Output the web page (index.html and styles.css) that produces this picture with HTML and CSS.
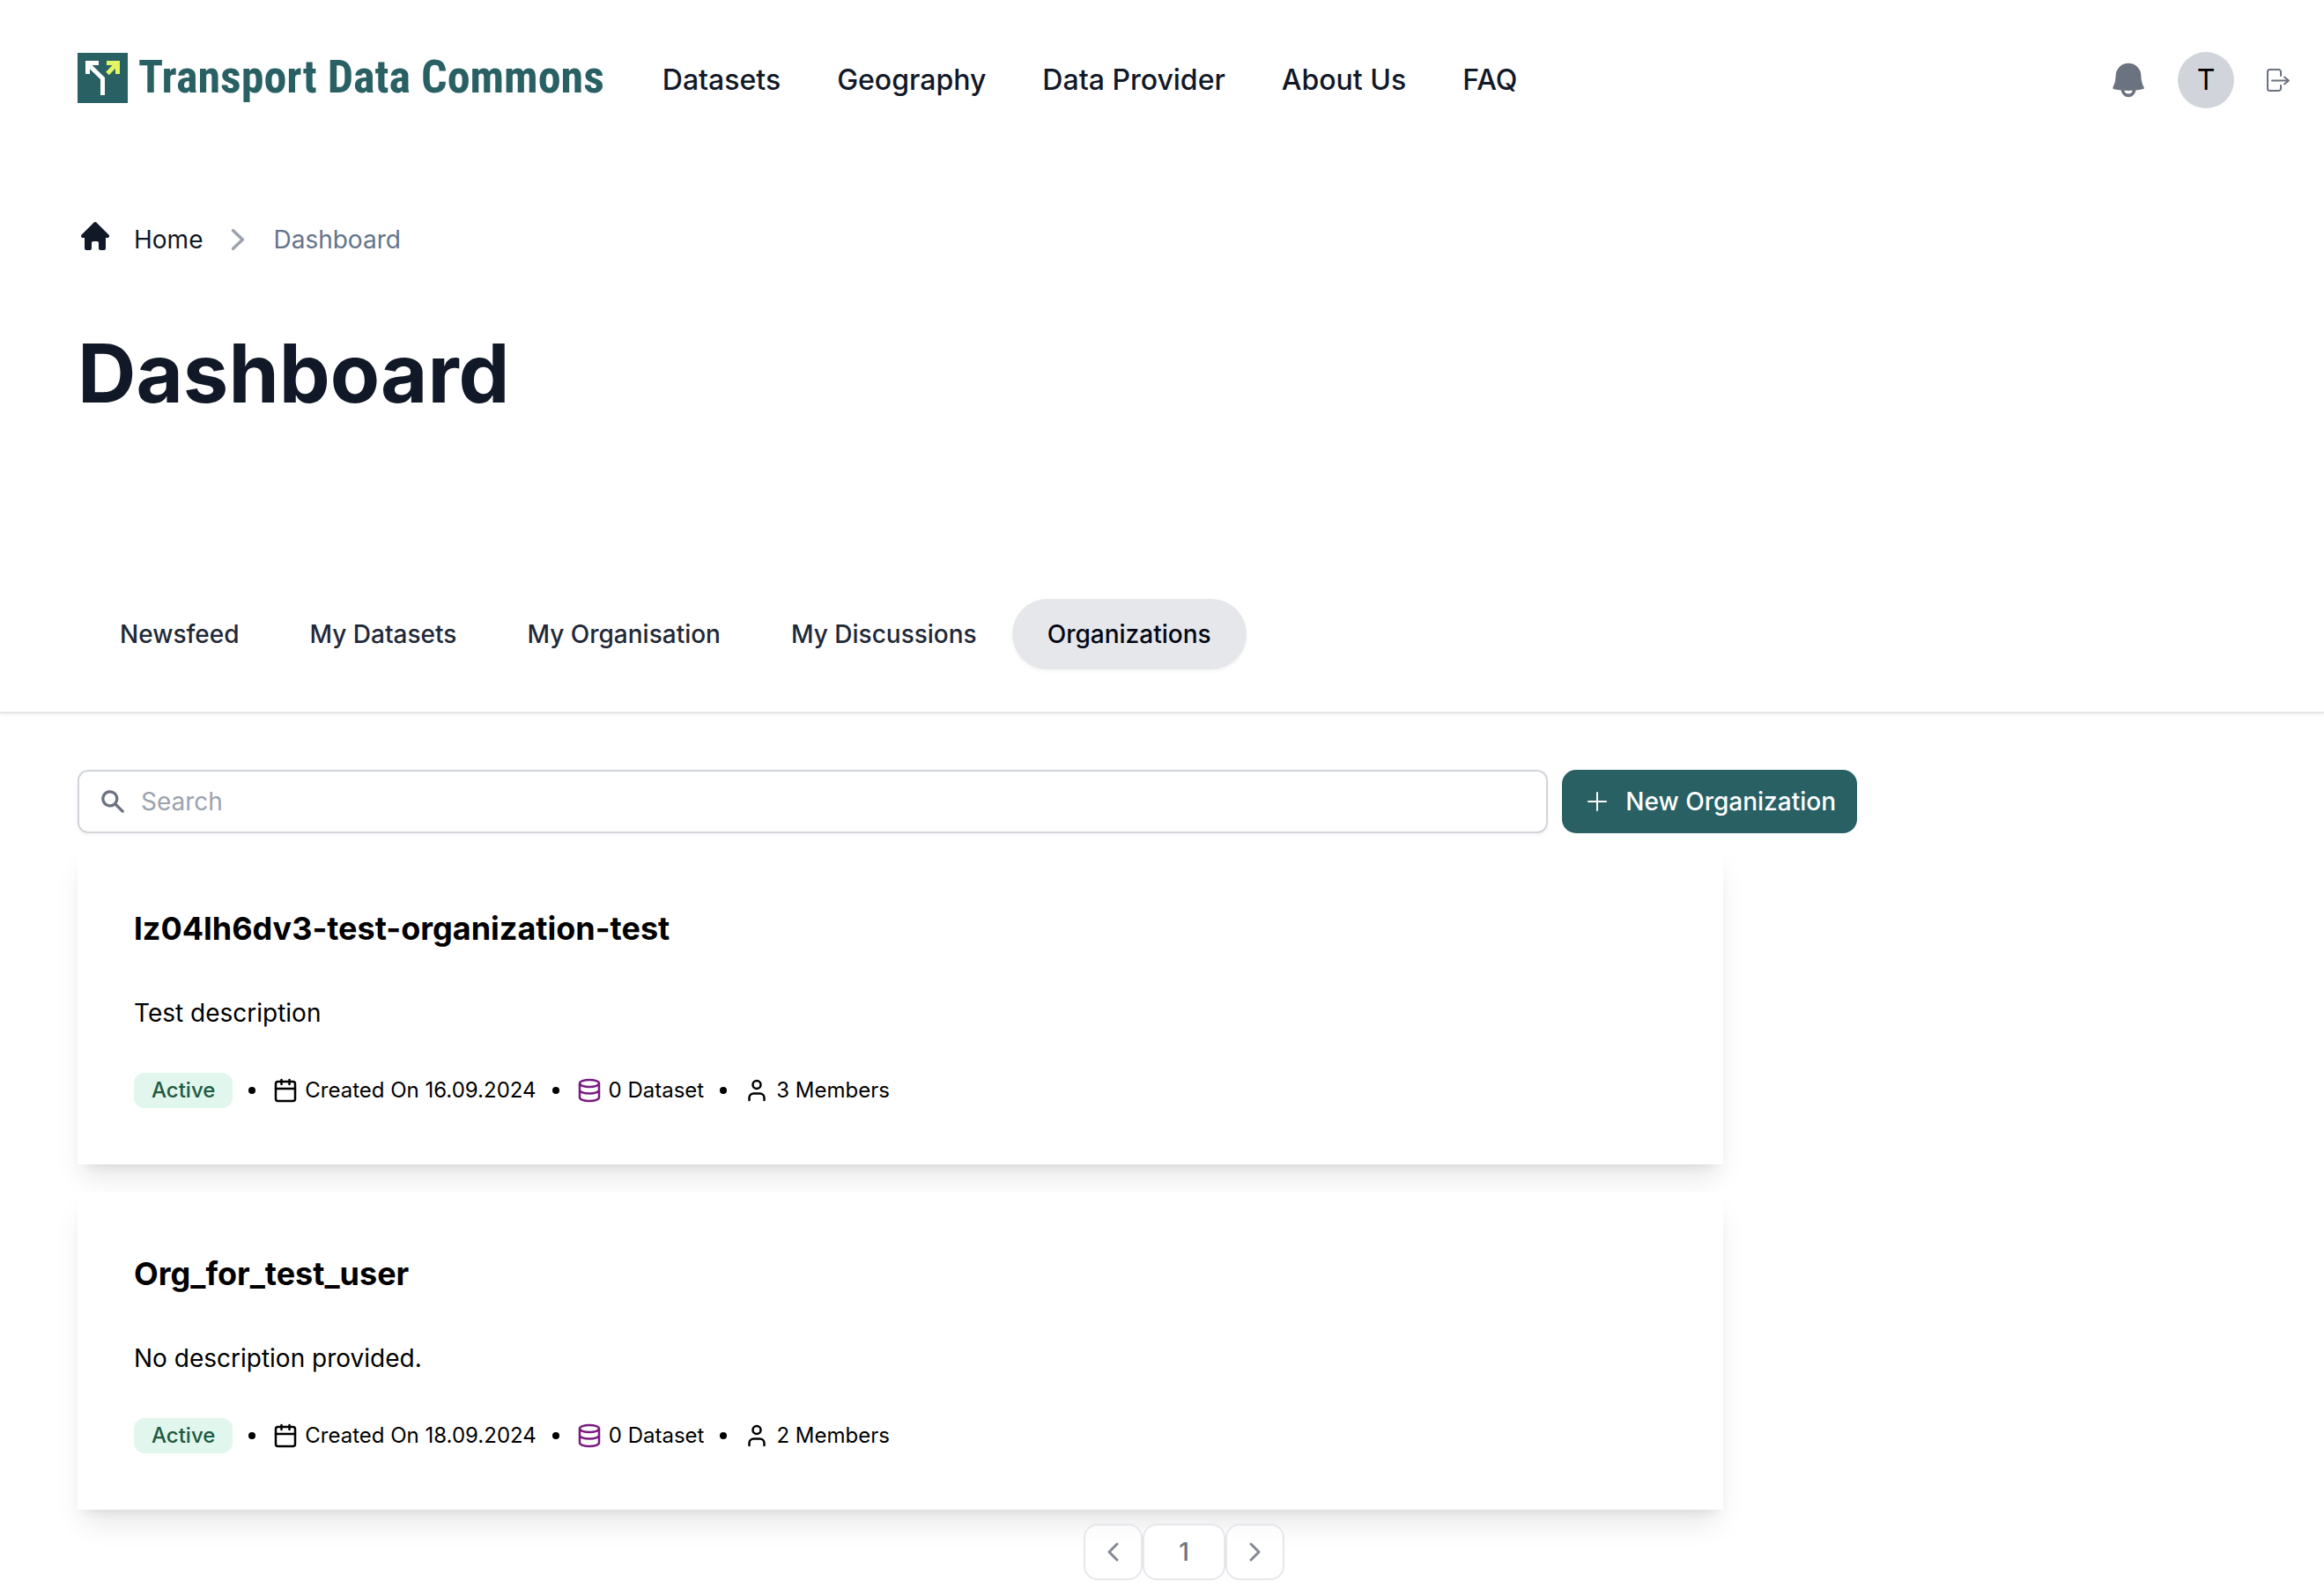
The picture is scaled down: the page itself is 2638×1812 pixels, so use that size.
FILE: index.html
```html
<!DOCTYPE html>
<html lang="en">
<head>
<meta charset="utf-8">
<title>Dashboard - Transport Data Commons</title>
<meta name="viewport" content="width=device-width, initial-scale=1">
<link rel="stylesheet" href="styles.css">
</head>
<body>
<svg class="sprite" aria-hidden="true">
  <symbol id="calendar" viewBox="0 0 32 32"><g fill="none" stroke="currentColor" stroke-width="2.500" stroke-linecap="round" stroke-linejoin="round"><rect x="5" y="6" width="22" height="22" rx="2.500"/><path d="M11.500 4v5M20.500 4v5M5 14h22"/></g></symbol>
  <symbol id="database" viewBox="0 0 32 32"><g fill="none" stroke="currentColor" stroke-width="2.500"><ellipse cx="16" cy="8" rx="11" ry="4"/><path d="M5 8v16c0 2.200 4.900 4 11 4s11-1.800 11-4V8M5 15.500c0 2.200 4.900 4 11 4s11-1.800 11-4"/></g></symbol>
  <symbol id="user" viewBox="0 0 32 32"><g fill="none" stroke="currentColor" stroke-width="2.500" stroke-linecap="round"><circle cx="16" cy="9.500" r="4.500"/><path d="M7.500 27v-2.500a5 5 0 0 1 5-5h7a5 5 0 0 1 5 5v2.500"/></g></symbol>
</svg>

<header class="header">
  <a class="logo" href="#">
    <svg class="logo-mark" viewBox="0 0 57 57" aria-hidden="true"><path fill="#286064" d="M0 0h57v57H0z"/><path fill="none" stroke="#fff" stroke-width="5" d="M28.500 48V29L13 14"/><path fill="#fff" d="M9 9h15v5H14v10H9z"/><path fill="none" stroke="#e3f563" stroke-width="5" d="M34 23.500l9-9.500"/><path fill="#e3f563" d="M33 9h15v15h-5V14H33z"/></svg>
    <span>Transport Data Commons</span>
  </a>
  <nav class="nav" aria-label="Main">
    <a href="#">Datasets</a>
    <a href="#">Geography</a>
    <a href="#">Data Provider</a>
    <a href="#">About Us</a>
    <a href="#">FAQ</a>
  </nav>
  <div class="account">
    <button class="icon-button" type="button" aria-label="Notifications"><svg class="icon-bell" viewBox="0 0 20 20"><path fill="currentColor" fill-rule="evenodd" d="M4 8a6 6 0 1112 0c0 1.887.454 3.665 1.257 5.234a.75.75 0 01-.515 1.076 32.903 32.903 0 01-3.256.508 3.500 3.500 0 01-6.972 0 32.910 32.910 0 01-3.256-.508.75.75 0 01-.515-1.076A11.448 11.448 0 004 8zm6 7c-.655 0-1.305-.02-1.950-.057a2 2 0 003.900 0c-.645.038-1.295.057-1.950.057z"/></svg></button>
    <button class="avatar" type="button">T</button>
    <button class="icon-button" type="button" aria-label="Sign out"><svg class="icon-signout" viewBox="0 0 32 32"><path fill="none" stroke="currentColor" stroke-width="2" stroke-linecap="round" stroke-linejoin="round" d="M21 11V6.500A2.500 2.500 0 0 0 18.500 4h-10A2.500 2.500 0 0 0 6 6.500v19A2.500 2.500 0 0 0 8.500 28h10a2.500 2.500 0 0 0 2.500-2.500V22M11 16.500h19M25 12.500l5 4-5 4"/></svg></button>
  </div>
</header>

<section class="intro">
  <nav aria-label="Breadcrumb">
    <ol class="breadcrumb">
      <li><a href="#"><svg class="icon-home" viewBox="0 0 20 20" aria-hidden="true"><path fill="currentColor" d="M9.293 2.293a1 1 0 011.414 0l7 7A1 1 0 0117 11h-1v6a1 1 0 01-1 1h-2a1 1 0 01-1-1v-3a1 1 0 00-1-1H9a1 1 0 00-1 1v3a1 1 0 01-1 1H5a1 1 0 01-1-1v-6H3a1 1 0 01-.707-1.707l7-7z"/></svg>Home</a></li>
      <li><svg class="icon-crumb" viewBox="0 0 20 20" aria-hidden="true"><path fill="currentColor" d="M7.210 14.770a.75.75 0 01.02-1.060L11.168 10 7.230 6.290a.75.75 0 111.040-1.080l4.500 4.250a.75.75 0 010 1.080l-4.500 4.250a.75.75 0 01-1.060-.02z"/></svg><a class="current" href="#" aria-current="page">Dashboard</a></li>
    </ol>
  </nav>
  <h1>Dashboard</h1>
</section>

<div class="tabs" role="tablist">
  <button type="button" role="tab">Newsfeed</button>
  <button type="button" role="tab">My Datasets</button>
  <button type="button" role="tab">My Organisation</button>
  <button type="button" role="tab">My Discussions</button>
  <button class="active" type="button" role="tab" aria-selected="true">Organizations</button>
</div>

<main class="main">
  <div class="toolbar">
    <label class="search">
      <svg viewBox="0 0 20 20" aria-hidden="true"><path fill="currentColor" fill-rule="evenodd" d="M8 4a4 4 0 100 8 4 4 0 000-8zM2 8a6 6 0 1110.890 3.476l4.817 4.817a1 1 0 01-1.414 1.414l-4.816-4.816A6 6 0 012 8z"/></svg>
      <input type="search" placeholder="Search" aria-label="Search">
    </label>
    <button class="new-button" type="button"><svg viewBox="0 0 40 40" aria-hidden="true"><path fill="none" stroke="currentColor" stroke-width="2" stroke-linecap="round" d="M20 10v20M10 20h20"/></svg>New Organization</button>
  </div>

  <div class="cards">
    <article class="card">
      <h2>lz04lh6dv3-test-organization-test</h2>
      <p>Test description</p>
      <div class="meta">
        <span class="badge">Active</span><i class="dot"></i>
        <span class="fact"><svg><use href="#calendar"/></svg>Created On 16.09.2024</span><i class="dot"></i>
        <span class="fact"><svg class="purple"><use href="#database"/></svg>0 Dataset</span><i class="dot"></i>
        <span class="fact"><svg><use href="#user"/></svg>3 Members</span>
      </div>
    </article>
    <article class="card">
      <h2>Org_for_test_user</h2>
      <p>No description provided.</p>
      <div class="meta">
        <span class="badge">Active</span><i class="dot"></i>
        <span class="fact"><svg><use href="#calendar"/></svg>Created On 18.09.2024</span><i class="dot"></i>
        <span class="fact"><svg class="purple"><use href="#database"/></svg>0 Dataset</span><i class="dot"></i>
        <span class="fact"><svg><use href="#user"/></svg>2 Members</span>
      </div>
    </article>
  </div>

  <nav class="pager" aria-label="Pagination">
    <button class="step" type="button" aria-label="Previous page" disabled><svg viewBox="0 0 24 24"><path d="M16 3l-9 9 9 9"/></svg></button>
    <button class="page" type="button" aria-current="page">1</button>
    <button class="step" type="button" aria-label="Next page" disabled><svg viewBox="0 0 24 24"><path d="M8 3l9 9-9 9"/></svg></button>
  </nav>
</main>
</body>
</html>
```
FILE: styles.css
```css
*, *::before, *::after { box-sizing: border-box; }
body {
  margin: 0;
  background: #fff;
  color: #000;
  font-family: Inter, "Liberation Sans", sans-serif;
  font-size: 28px;
  line-height: 40px;
}
h1, h2, p, ol { margin: 0; padding: 0; }
a { color: inherit; text-decoration: none; }
button { margin: 0; padding: 0; border: 0; background: none; color: inherit; font: inherit; cursor: pointer; }
svg { display: block; flex: none; }
.sprite { position: absolute; width: 0; height: 0; }

.header {
  display: flex;
  align-items: center;
  min-height: 182px;
  padding: 0 38px 0 88px;
}
.logo {
  display: flex;
  align-items: center;
  gap: 12px;
  margin-bottom: 6px;
  color: #286064;
  font-family: "Roboto Condensed", "Liberation Sans Narrow", Roboto, sans-serif;
  font-size: 52px;
  font-weight: 700;
  line-height: 56px;
  white-space: nowrap;
}
.logo-mark { width: 57px; height: 57px; }
.nav {
  display: flex;
  gap: 64px;
  margin-left: 66px;
  color: #111827;
  font-size: 32px;
  font-weight: 500;
  white-space: nowrap;
}
.account { display: flex; align-items: center; gap: 32px; margin-left: auto; color: #6b7280; }
.icon-bell { width: 48px; height: 48px; }
.icon-signout { width: 32px; height: 32px; }
.avatar {
  width: 64px;
  height: 64px;
  border-radius: 50%;
  background: #d1d5db;
  color: #000;
  font-size: 32px;
}

.intro { padding: 66px 38px 208px 88px; }
.breadcrumb { display: flex; gap: 16px; list-style: none; color: #111827; line-height: 48px; }
.breadcrumb li, .breadcrumb a { display: flex; }
.breadcrumb li { gap: 16px; }
.icon-home { width: 40px; height: 40px; margin-right: 24px; }
.icon-crumb { width: 48px; height: 48px; color: #9ca3af; }
.current { color: #64748b; }
h1 { margin-top: 80px; color: #111827; font-size: 92px; font-weight: 700; line-height: 96px; }

.tabs {
  display: flex;
  padding: 0 96px 48px;
  border-bottom: 2px solid #e5e7eb;
  box-shadow: 0 2px 4px rgba(0, 0, 0, .05);
  color: #1f2937;
}
.tabs button { padding: 20px 40px; border-radius: 40px; font-weight: 500; white-space: nowrap; }
.tabs .active { background: #e5e7eb; color: #030712; box-shadow: 0 2px 4px rgba(0, 0, 0, .05); }

.main { padding: 64px 38px 18px 88px; }
.toolbar { display: flex; gap: 16px; max-width: 2020px; }
.search {
  display: flex;
  flex: 1;
  align-items: center;
  gap: 16px;
  min-width: 0;
  padding: 0 22px;
  border: 2px solid #d1d5db;
  border-radius: 12px;
  box-shadow: 0 2px 4px rgba(0, 0, 0, .05);
  color: #6b7280;
}
.search svg { width: 32px; height: 32px; }
.search input { flex: 1; min-width: 0; height: 68px; padding: 0; border: 0; outline: 0; background: none; color: #111827; font: inherit; }
.search input::placeholder { color: #9ca3af; opacity: 1; }
.new-button {
  display: flex;
  align-items: center;
  gap: 12px;
  padding: 16px 24px 16px 20px;
  border-radius: 16px;
  background: #286064;
  color: #fff;
  font-weight: 500;
  white-space: nowrap;
}
.new-button svg { width: 40px; height: 40px; }

.cards { display: grid; gap: 32px; max-width: 1868px; margin-top: 16px; }
.card {
  padding: 64px;
  background: #fff;
  box-shadow: 0 20px 30px -6px rgba(0, 0, 0, .1), 0 8px 12px -8px rgba(0, 0, 0, .1);
}
.card h2 { font-size: 36px; font-weight: 700; line-height: 56px; }
.card p { margin: 48px 0; }
.meta { display: flex; flex-wrap: wrap; align-items: center; gap: 16px; font-size: 24px; }
.badge { padding: 0 20px; border-radius: 12px; background: #e1f6ec; color: #1f5a41; font-weight: 500; }
.dot { width: 8px; height: 8px; margin: 0 2px; border-radius: 50%; background: #000; }
.fact { display: flex; align-items: center; gap: 6px; }
.fact svg { width: 32px; height: 32px; }
.purple { color: #7a1a82; }

.pager { display: flex; justify-content: center; margin-top: 16px; color: #6b7280; }
.pager button { height: 64px; border: 2px solid #e5e7eb; border-radius: 16px; }
.pager .page { padding: 0 39px; background: #fff; font-weight: 500; }
.pager .step { display: grid; place-items: center; width: 67px; background: rgba(255, 255, 255, .5); color: #858993; }
.pager svg { width: 24px; height: 24px; fill: none; stroke: currentColor; stroke-width: 3; stroke-linecap: round; stroke-linejoin: round; }
```
